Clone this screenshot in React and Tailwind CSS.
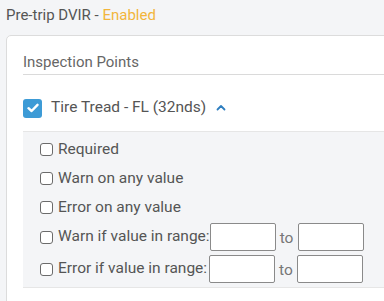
import React from "react";

const Box = () => (
  <span className="inline-block w-[13px] h-[13px] rounded-[3px] border border-[#6b6b6b] bg-white shrink-0" />
);

const CheckRow = ({ label }) => (
  <div className="flex items-center h-[29px] gap-[5px]">
    <Box />
    <span>{label}</span>
  </div>
);

const RangeRow = ({ label }) => (
  <div className="flex items-center h-[28px]">
    <div className="flex items-center gap-[5px] min-w-[169px] whitespace-nowrap shrink-0">
      <Box />
      <span>{label}</span>
    </div>
    <input className="w-[66px] h-[28px] border border-[#8a8a8a] rounded-[2px] bg-white shrink-0" />
    <span className="w-[22px] text-center text-[#777] pt-[4px] shrink-0">to</span>
    <input className="w-[66px] h-[28px] border border-[#8a8a8a] rounded-[2px] bg-white shrink-0" />
  </div>
);

export default function App() {
  return (
    <div
      className="w-[384px] h-[301px] overflow-hidden bg-[#f4f5f7] text-[#555]"
      style={{ fontFamily: "Roboto, 'Liberation Sans', sans-serif" }}
    >
      <div className="pl-[6px] pt-[5px] h-[35px] text-[15px] leading-[20px]">
        Pre-trip DVIR - <span className="text-[#f2b53c]">Enabled</span>
      </div>
      <div className="ml-[6px] w-[420px] h-[300px] bg-white border border-[#dcdcdc] rounded-tl-[5px] pl-[16px] pt-[15px]">
        <div className="h-[24px] text-[15px] leading-[22px] text-[#666] border-b border-[#dadada]">
          Inspection Points
        </div>
        <div className="flex items-center h-[56px] pt-[10px] gap-[9px]">
          <span className="w-[19px] h-[19px] rounded-[3px] bg-[#3d9bd6] flex items-center justify-center">
            <svg width="12" height="10" viewBox="0 0 12 10" fill="none">
              <path d="M1.5 5.2 L4.6 8 L10.5 1.8" stroke="white" strokeWidth="2.4" strokeLinecap="round" strokeLinejoin="round" />
            </svg>
          </span>
          <span className="text-[15.5px]">Tire Tread - FL (32nds)</span>
          <svg width="10" height="7" viewBox="0 0 10 7" fill="none" className="ml-[1px] mt-[-2px]">
            <path d="M1.5 5.5 L5 2 L8.5 5.5" stroke="#2f7fc0" strokeWidth="1.8" strokeLinecap="round" strokeLinejoin="round" />
          </svg>
        </div>
        <div className="bg-[#f4f5f7] border-t border-b border-[#e6e6e6] pl-[17px] pt-[3px] pb-[4px] text-[15.5px]">
          <CheckRow label="Required" />
          <CheckRow label="Warn on any value" />
          <CheckRow label="Error on any value" />
          <div className="flex flex-col gap-[4px] pt-[1px]">
            <RangeRow label="Warn if value in range:" />
            <RangeRow label="Error if value in range:" />
          </div>
        </div>
      </div>
    </div>
  );
}
